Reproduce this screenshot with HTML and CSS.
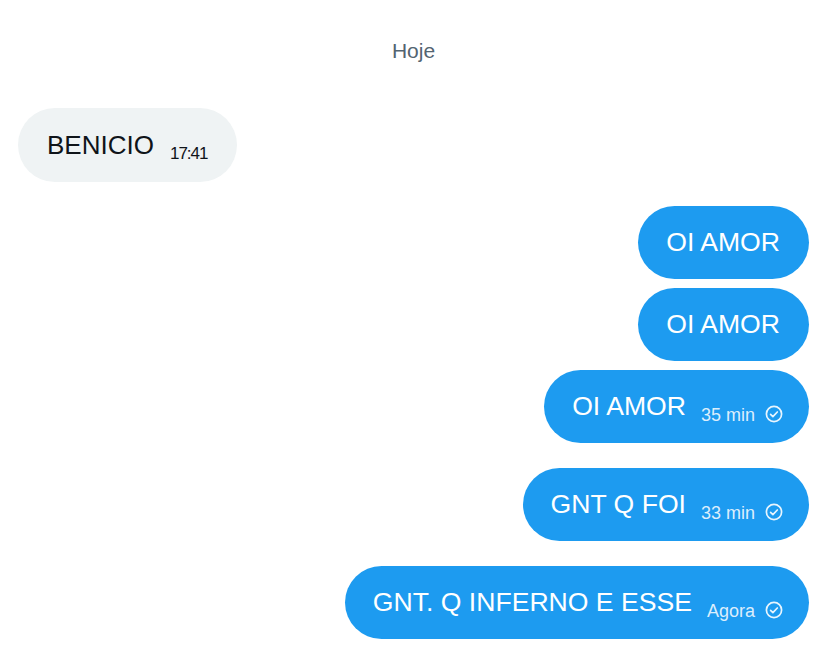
FILE: index.html
```html
<!DOCTYPE html>
<html lang="pt">
<head>
<meta charset="utf-8">
<title>Conversa</title>
<link rel="stylesheet" href="styles.css">
</head>
<body>
<main class="chat">
  <div class="day">Hoje</div>

  <div class="row received first">
    <div class="bubble in"><span class="txt">BENICIO</span><span class="meta">17:41</span></div>
  </div>

  <div class="row sent group-start">
    <div class="bubble out plain"><span class="txt">OI AMOR</span></div>
  </div>
  <div class="row sent tight">
    <div class="bubble out plain"><span class="txt">OI AMOR</span></div>
  </div>
  <div class="row sent tight">
    <div class="bubble out"><span class="txt">OI AMOR</span><span class="meta">35 min</span><svg class="check" viewBox="0 0 18 18" width="18" height="18"><circle cx="9" cy="9" r="7.6" fill="none" stroke="currentColor" stroke-width="1.7"/><path d="M5.6 9.3l2.3 2.3 4.4-4.6" fill="none" stroke="currentColor" stroke-width="1.7" stroke-linecap="round" stroke-linejoin="round"/></svg></div>
  </div>
  <div class="row sent loose">
    <div class="bubble out"><span class="txt">GNT Q FOI</span><span class="meta">33 min</span><svg class="check" viewBox="0 0 18 18" width="18" height="18"><circle cx="9" cy="9" r="7.6" fill="none" stroke="currentColor" stroke-width="1.7"/><path d="M5.6 9.3l2.3 2.3 4.4-4.6" fill="none" stroke="currentColor" stroke-width="1.7" stroke-linecap="round" stroke-linejoin="round"/></svg></div>
  </div>
  <div class="row sent loose">
    <div class="bubble out"><span class="txt">GNT. Q INFERNO E ESSE</span><span class="meta">Agora</span><svg class="check" viewBox="0 0 18 18" width="18" height="18"><circle cx="9" cy="9" r="7.6" fill="none" stroke="currentColor" stroke-width="1.7"/><path d="M5.6 9.3l2.3 2.3 4.4-4.6" fill="none" stroke="currentColor" stroke-width="1.7" stroke-linecap="round" stroke-linejoin="round"/></svg></div>
  </div>
</main>
</body>
</html>
```
FILE: styles.css
```css
html, body {
  margin: 0;
  padding: 0;
  background: #ffffff;
}

.chat {
  font-family: "Liberation Sans", Arial, sans-serif;
  padding: 39px 19px 0 18px;
  display: flex;
  flex-direction: column;
}

.day {
  text-align: center;
  font-size: 21px;
  line-height: 24px;
  color: #536471;
}

.row {
  display: flex;
}

.row.received {
  justify-content: flex-start;
}

.row.sent {
  justify-content: flex-end;
}

.row.first {
  margin-top: 45px;
}

.row.group-start {
  margin-top: 24px;
}

.row.tight {
  margin-top: 9px;
}

.row.loose {
  margin-top: 25px;
}

.bubble {
  box-sizing: border-box;
  height: 73px;
  line-height: 73px;
  border-radius: 37px;
  padding: 0 26px 0 28px;
  white-space: nowrap;
}

.bubble.plain {
  padding: 0 29px 0 28px;
}

.bubble.in {
  background: #eff3f4;
  color: #0f1419;
  height: 74px;
  line-height: 75px;
  padding: 0 30px 0 29px;
}

.bubble.out {
  background: #1d9bf0;
  color: #ffffff;
}

.txt {
  font-size: 26.6px;
}

.bubble.in .txt {
  font-size: 26px;
}

.meta {
  font-size: 18px;
  margin-left: 15px;
  vertical-align: -6px;
}

.bubble.in .meta {
  font-size: 17px;
  margin-left: 16px;
  vertical-align: -5px;
  letter-spacing: -1px;
}

.bubble.out .meta {
  color: rgba(255, 255, 255, 0.85);
}

.check {
  margin-left: 10px;
  vertical-align: -8px;
  color: rgba(255, 255, 255, 0.9);
}
```
